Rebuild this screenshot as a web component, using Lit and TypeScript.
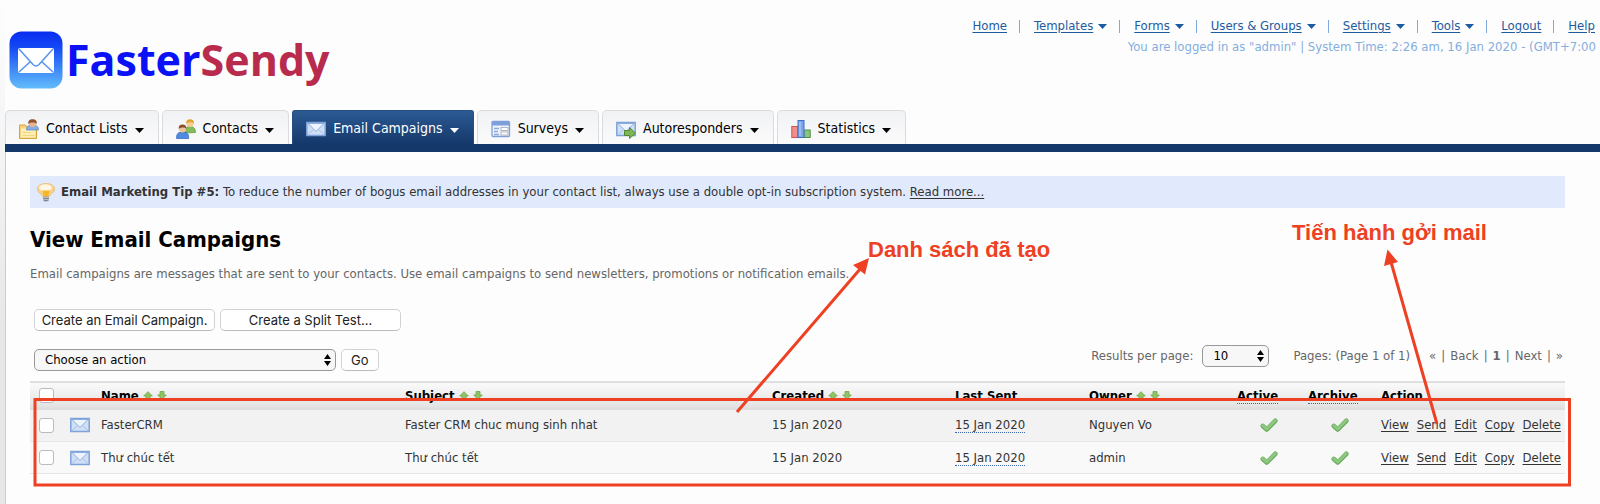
import { LitElement, html, css, svg, nothing } from "lit";
import { customElement } from "lit/decorators.js";
import { classMap } from "lit/directives/class-map.js";

interface Tab { label: string; icon: unknown; active?: boolean; }
interface Campaign { name: string; subject: string; created: string; sent: string; owner: string; }

const envelope = svg`
  <rect x=".8" y="3.500" width="18.400" height="13" fill="#cfdff6" stroke="#7fa3d8" stroke-width="1.500"/>
  <path d="M2 15.500 7.500 10.500M18 15.500 12.500 10.500" stroke="#a9c2e8" fill="none"/>
  <path d="M2 4.500 10 12.500 18 4.500Z" fill="#eef4fd" stroke="#8badde"/>`;

const mailIcon = html`<svg class="icon" viewBox="0 0 20 20" aria-hidden="true">${envelope}</svg>`;

const listIcon = html`<svg class="icon" viewBox="0 0 20 20" aria-hidden="true">
  <path d="M.5 7.500V6h6l1.500 2H17.500V19.500H.5Z" fill="#f6d27c" stroke="#d9a23c"/>
  <rect x="2" y="9.500" width="14.500" height="9" fill="#fdeeb4"/>
  <path d="M7.500 11c0-4 2.500-5 6-5s6 1 6 5Z" fill="#86aee6" stroke="#5c86c8" stroke-width=".7"/>
  <circle cx="13.500" cy="4.500" r="3.600" fill="#e8b48c"/>
  <path d="M9.200 5C9 1.500 11 .3 13.500 .3s4.700 1.200 4.400 4.700C16.500 3.200 12 2.900 9.200 5Z" fill="#8f5433"/>
  <path d="M3.500 16.500h12M3.500 13.500h8" stroke="#f3d583"/>
</svg>`;

const peopleIcon = html`<svg class="icon" viewBox="0 0 20 20" aria-hidden="true">
  <path d="M9 14c-.5-5 2-6.500 5-6.500s5.500 1.500 5.500 6Z" fill="#82bd5a" stroke="#5f9a3b" stroke-width=".7"/>
  <circle cx="14" cy="4.500" r="3.600" fill="#f5cd98"/>
  <path d="M10.200 4.500C10 1.500 11.500 .3 14 .3s4.200 1.400 3.900 4.400C16 3 13 2.800 10.200 4.500Z" fill="#e0a52e"/>
  <path d="M.6 19.500c-.4-5 2-6.500 6-6.500s6.500 1.500 6 6.500Z" fill="#4f8ae0" stroke="#2f65bb" stroke-width=".7"/>
  <circle cx="6.500" cy="9.800" r="3.600" fill="#f0c39c"/>
  <path d="M2.700 9.800C2.500 7 4 5.600 6.500 5.600s4.200 1.400 3.900 4.300C9 8.400 5.500 8 2.700 9.800Z" fill="#8a4f2c"/>
</svg>`;

const surveyIcon = html`<svg class="icon" viewBox="0 0 20 20" aria-hidden="true">
  <rect x="1" y="2.500" width="17.500" height="15" rx="1" fill="#eef2fa" stroke="#7f9fd9" stroke-width="1.300"/>
  <path d="M1 3.500q0-1 1-1h15.500q1 0 1 1V6.500H1Z" fill="#7d9fdb"/>
  <path d="M3 9.500h5M3 12.500h4M3 15.500h5" stroke="#8ea9db" stroke-width="1.300"/>
  <rect x="10" y="8.500" width="7" height="3" fill="#fff" stroke="#b0b6c4"/>
  <rect x="10" y="13" width="7" height="3" fill="#fff" stroke="#b0b6c4"/>
</svg>`;

const autoIcon = html`<svg class="icon" viewBox="0 0 20 20" aria-hidden="true">${envelope}
  <path d="M8.500 11.500h5V8.500l6 5.700-6 5.300v-3h-5Z" fill="#7db653" stroke="#538a31"/>
</svg>`;

const statsIcon = html`<svg class="icon" viewBox="0 0 20 20" aria-hidden="true">
  <rect x=".8" y="7.500" width="6" height="11" fill="#f08f8a" stroke="#d2524f"/>
  <rect x="13" y="11" width="6.200" height="7.500" fill="#8cc47e" stroke="#4c9346"/>
  <rect x="7" y="1.500" width="6" height="17" fill="#7ba6ea" stroke="#3e6fc4"/>
  <path d="M9 3v14" stroke="#a9c6f4" stroke-width="1.500"/>
</svg>`;

const bulbIcon = html`<svg class="bulb" viewBox="0 0 18 20" aria-hidden="true">
  <path d="M6 13.500h6V17q0 2.500-3 2.500T6 17Z" fill="#85898d"/>
  <path d="M6 15.500h6M6 17.500h6" stroke="#c6c9cb" stroke-width=".8"/>
  <path d="M9 1.500c5 0 8.600 2.200 8.600 5.800 0 3.600-4.200 4.400-5.100 6.900h-7C4.600 11.700 .4 10.900 .4 7.300 .4 3.700 4 1.500 9 1.500Z" fill="#f7d08a" stroke="#e6bd74" stroke-width=".8"/>
  <ellipse cx="8.500" cy="5.800" rx="6.500" ry="3.500" fill="#fff5e0"/>
  <path d="M6.500 14 5.500 8.500h7l-1 5.500Z" fill="#f5b728"/>
</svg>`;

const caret = html`<svg class="caret" viewBox="0 0 9 5" aria-hidden="true"><path d="M0 0h9L4.500 5Z" fill="currentColor"/></svg>`;

const tick = html`<svg class="tick" viewBox="0 0 18 16" role="img" aria-label="Yes" fill="none" stroke-linejoin="round" stroke-linecap="round">
  <path d="M2.800 9 6.800 12.500 15.300 3.800" stroke="#68a85c" stroke-width="4.600"/>
  <path d="M2.800 8.700 6.800 12 15.200 3.500" stroke="#8cc97f" stroke-width="3"/>
</svg>`;

const sorters = html`<span class="sorters">
  <svg viewBox="0 0 10 9" aria-hidden="true"><path d="M5 .7 9.300 5H7v3.500H3V5H.7Z" fill="#8fc466" stroke="#6fa548" stroke-width=".8"/></svg>
  <svg viewBox="0 0 10 9" aria-hidden="true"><path d="M5 8.300 .7 4H3V.5h4V4h2.300Z" fill="#8fc466" stroke="#6fa548" stroke-width=".8"/></svg>
</span>`;

const stepper = html`<svg class="stepper" viewBox="0 0 7 12" aria-hidden="true"><path d="M3.500 0 7 5H0ZM3.500 12 0 7h7Z" fill="#000"/></svg>`;

@customElement("app-root")
export class AppRoot extends LitElement {
  static styles = css`
    :host {
      display: block;
      position: relative;
      min-height: 100vh;
      overflow: hidden;
      background: #fdfdfd;
      color: #333;
      font: 13px/16px "DejaVu Sans Condensed", "DejaVu Sans", Tahoma, sans-serif;
    }
    *, *::before { box-sizing: border-box; }
    a { color: inherit; text-underline-offset: 2px; }
    button, select, input { font: inherit; margin: 0; }

    .frame {
      min-height: 100vh;
      display: flex;
      flex-direction: column;
      padding-left: 5px;
      background: linear-gradient(#fdfdfd, #f4f4f4 30%, #e7e7e7 65%) 0 0 / 5px 100% no-repeat, #fdfdfd;
    }
    .header {
      display: flex;
      justify-content: space-between;
      align-items: flex-start;
      height: 110px;
    }
    .logo {
      display: flex;
      align-items: center;
      gap: 3px;
      padding: 31px 0 0 4px;
      text-decoration: none;
      font: bold 43px/58px "Open Sans", sans-serif;
      color: #0a12f5;
    }
    .logo svg { width: 54px; height: 58px; }
    .logo .red { color: #b92b4d; }
    .account { padding-top: 18px; text-align: right; white-space: nowrap; }
    .links { display: flex; justify-content: flex-end; padding: 0 5px 5px 0; margin: 0; list-style: none; color: #1c5ba0; }
    .links li { display: flex; align-items: center; gap: 5px; }
    .links li + li::before { content: ""; width: 1px; height: 13px; margin: 0 9px 0 12px; background: #7fa9dc; }
    .who { margin: 0; padding-right: 4px; color: #86aedd; }

    .tabs { display: flex; gap: 3px; border-bottom: 8px solid #15386b; }
    .tab {
      display: flex;
      align-items: center;
      gap: 7px;
      height: 34px;
      padding: 2px 14px 0 13px;
      border: 1px solid #d9dcdf;
      border-bottom: 0;
      border-radius: 5px 5px 0 0;
      background: linear-gradient(#f1f2f4, #fbfbfc);
      color: #000;
      font-size: 14px;
      text-decoration: none;
    }
    .tab span { padding-bottom: 2px; }
    .tab.active { background: linear-gradient(#2b5a93, #15386b); border-color: #274e80; border-radius: 3px 3px 0 0; color: #fff; }
    .tab .caret { margin-top: 4px; }
    .icon { width: 20px; height: 20px; flex: none; }
    .caret { width: 9px; height: 5px; flex: none; }

    .content { flex: 1; padding: 24px 35px 20px 24px; border-left: 1px solid #ccc; }
    .tip { display: flex; align-items: center; gap: 6px; min-height: 32px; padding: 0 7px; background: #e1eafc; }
    .tip p { margin: 0; }
    .bulb { width: 18px; height: 20px; flex: none; }
    h1 { margin: 18px 0 12px; font-size: 22px; line-height: 28px; color: #000; }
    .intro { margin: 0 0 27px; color: #666; }

    .row { display: flex; align-items: center; gap: 5px; padding-left: 4px; }
    .row + .row { margin-top: 18px; }
    .btn {
      height: 22px;
      padding: 0 9px;
      border: 1px solid #d2d2d2;
      border-bottom-color: #bbb;
      border-radius: 5px;
      background: #fff;
      color: #222;
      font: 13px/20px Inter, sans-serif;
      white-space: nowrap;
    }
    .btn.wide { width: 181px; padding: 0 4px; }
    .pick { display: grid; align-items: center; }
    .pick > * { grid-area: 1 / 1; }
    .pick select {
      appearance: none;
      height: 22px;
      width: 100%;
      padding: 0 10px;
      border: 1px solid #999;
      border-radius: 5px;
      background: #f7f7f7;
      color: #000;
    }
    .pick .stepper { justify-self: end; width: 7px; height: 12px; margin-right: 5px; pointer-events: none; }
    .pick.action { width: 302px; }
    .pick.size { width: 67px; }
    .pager { display: flex; align-items: center; gap: 9px; margin: -8px 0 0 auto; padding-right: 2px; color: #666; white-space: nowrap; }
    .pager .pages { margin: 0 10px 0 15px; }
    .steps { display: flex; gap: 5px; }

    table { width: 100%; margin-top: 10px; border-collapse: collapse; table-layout: fixed; }
    th, td { padding: 0 3px; text-align: left; white-space: nowrap; }
    th { height: 28px; color: #000; }
    td { height: 32px; border-bottom: 1px solid #e6e6e6; }
    thead tr { border-top: 1px solid #e0e0e0; background: linear-gradient(#fafafa, #e4e4e4 85%, #dcdcdc); }
    tbody tr:nth-child(odd) { background: #f2f2f2; }
    tbody tr:nth-child(even) { background: #f9f9f9; }
    .c-check, .c-icon { width: 34px; }
    .c-name { width: 304px; }
    .c-created { width: 183px; }
    .c-sent { width: 134px; }
    .c-owner { width: 148px; }
    .c-active { width: 71px; }
    .c-archive { width: 73px; }
    .c-action { width: 187px; }
    .box { padding-left: 9px; }
    .box input {
      display: block;
      appearance: none;
      width: 15px;
      height: 15px;
      border: 1px solid #bbb;
      border-radius: 3px;
      background: #fff;
    }
    td .icon { display: block; margin-left: 3px; }
    .hint { border-bottom: 1px dotted #3c66ad; }
    .sorters { display: inline-flex; gap: 4px; }
    .sorters svg { width: 10px; height: 9px; }
    .tick { display: block; width: 18px; height: 16px; margin-left: 23px; }
    .actions { display: flex; gap: 8px; }

    .notes { position: absolute; inset: 0; pointer-events: none; color: #ee4023; font: bold 22px/26px "Liberation Sans", Arial, sans-serif; white-space: nowrap; }
    .notes svg { position: absolute; top: 0; left: 0; width: 1600px; height: 504px; }
    .notes span { position: absolute; }
    .note-list { left: 868px; top: 237px; }
    .note-send { left: 1292px; top: 220px; }
  `;

  private links = [
    { label: "Home" }, { label: "Templates", menu: true }, { label: "Forms", menu: true },
    { label: "Users & Groups", menu: true }, { label: "Settings", menu: true },
    { label: "Tools", menu: true }, { label: "Logout" }, { label: "Help" },
  ];

  private tabs: Tab[] = [
    { label: "Contact Lists", icon: listIcon },
    { label: "Contacts", icon: peopleIcon },
    { label: "Email Campaigns", icon: mailIcon, active: true },
    { label: "Surveys", icon: surveyIcon },
    { label: "Autoresponders", icon: autoIcon },
    { label: "Statistics", icon: statsIcon },
  ];

  private campaigns: Campaign[] = [
    { name: "FasterCRM", subject: "Faster CRM chuc mung sinh nhat", created: "15 Jan 2020", sent: "15 Jan 2020", owner: "Nguyen Vo" },
    { name: "Thư chúc tết", subject: "Thư chúc tết", created: "15 Jan 2020", sent: "15 Jan 2020", owner: "admin" },
  ];

  private renderHeader() {
    return html`<header class="header">
      <a class="logo" href="#">
        <svg viewBox="0 0 54 58" aria-hidden="true">
          <defs><linearGradient id="sky" x1="0" y1="0" x2="0" y2="1">
            <stop offset="0" stop-color="#0a2cf0"/><stop offset=".25" stop-color="#1246f4"/><stop offset="1" stop-color="#62bdfb"/>
          </linearGradient></defs>
          <rect x=".5" y=".5" width="53" height="57" rx="12" fill="url(#sky)"/>
          <rect x="9" y="17" width="36" height="25" rx="2" fill="#fff"/>
          <path d="M10 18 24 33.500Q27 36.500 30 33.500L44 18M10 41 21.500 30.500M44 41 32.500 30.500" fill="none" stroke="#5a94f2" stroke-width="1.600"/>
        </svg>
        <span>Faster<span class="red">Sendy</span></span>
      </a>
      <div class="account">
        <ul class="links">
          ${this.links.map((l) => html`<li><a href="#">${l.label}</a>${l.menu ? caret : nothing}</li>`)}
        </ul>
        <p class="who">You are logged in as "admin" | System Time: 2:26 am, 16 Jan 2020 - (GMT+7:00</p>
      </div>
    </header>`;
  }

  private renderTable() {
    return html`<table>
      <thead><tr>
        <th class="c-check box"><input type="checkbox" aria-label="Select all"></th>
        <th class="c-icon"></th>
        <th class="c-name">Name ${sorters}</th>
        <th>Subject ${sorters}</th>
        <th class="c-created">Created ${sorters}</th>
        <th class="c-sent">Last Sent</th>
        <th class="c-owner">Owner ${sorters}</th>
        <th class="c-active"><span class="hint">Active</span></th>
        <th class="c-archive"><span class="hint">Archive</span></th>
        <th class="c-action">Action</th>
      </tr></thead>
      <tbody>
        ${this.campaigns.map((c) => html`<tr>
          <td class="box"><input type="checkbox" aria-label=${`Select ${c.name}`}></td>
          <td>${mailIcon}</td>
          <td>${c.name}</td>
          <td>${c.subject}</td>
          <td>${c.created}</td>
          <td><span class="hint">${c.sent}</span></td>
          <td>${c.owner}</td>
          <td>${tick}</td>
          <td>${tick}</td>
          <td><div class="actions">${["View", "Send", "Edit", "Copy", "Delete"].map((a) => html`<a href="#">${a}</a>`)}</div></td>
        </tr>`)}
      </tbody>
    </table>`;
  }

  render() {
    return html`<div class="frame">
        ${this.renderHeader()}
        <nav class="tabs">
          ${this.tabs.map((t) => html`<a href="#" class=${classMap({ tab: true, active: !!t.active })}>${t.icon}<span>${t.label}</span>${caret}</a>`)}
        </nav>
        <main class="content">
          <div class="tip">${bulbIcon}
            <p><b>Email Marketing Tip #5:</b> To reduce the number of bogus email addresses in your contact list, always use a double opt-in subscription system. <a href="#">Read more...</a></p>
          </div>
          <h1>View Email Campaigns</h1>
          <p class="intro">Email campaigns are messages that are sent to your contacts. Use email campaigns to send newsletters, promotions or notification emails.</p>
          <div class="row">
            <button class="btn wide">Create an Email Campaign.</button>
            <button class="btn wide">Create a Split Test...</button>
          </div>
          <div class="row">
            <span class="pick action"><select aria-label="Action"><option>Choose an action</option></select>${stepper}</span>
            <button class="btn">Go</button>
            <div class="pager">
              <label for="size">Results per page:</label>
              <span class="pick size"><select id="size"><option>10</option></select>${stepper}</span>
              <span class="pages">Pages: (Page 1 of 1)</span>
              <span class="steps"><span>«</span><span>|</span><span>Back</span><span>|</span><b>1</b><span>|</span><span>Next</span><span>|</span><span>»</span></span>
            </div>
          </div>
          ${this.renderTable()}
        </main>
      </div>
      <div class="notes">
        <svg viewBox="0 0 1600 504" fill="none" stroke="#ee4023" stroke-width="3" aria-hidden="true">
          <rect x="35" y="399.500" width="1534.500" height="85.500"/>
          <path d="M737 412 861 268M1437 424 1391 262"/>
          <path d="M869 258 865 274.500 853 265ZM1387.500 249.500 1398 262 1384 266Z" fill="#ee4023" stroke="none"/>
        </svg>
        <span class="note-list">Danh sách đã tạo</span>
        <span class="note-send">Tiến hành gởi mail</span>
      </div>`;
  }
}
